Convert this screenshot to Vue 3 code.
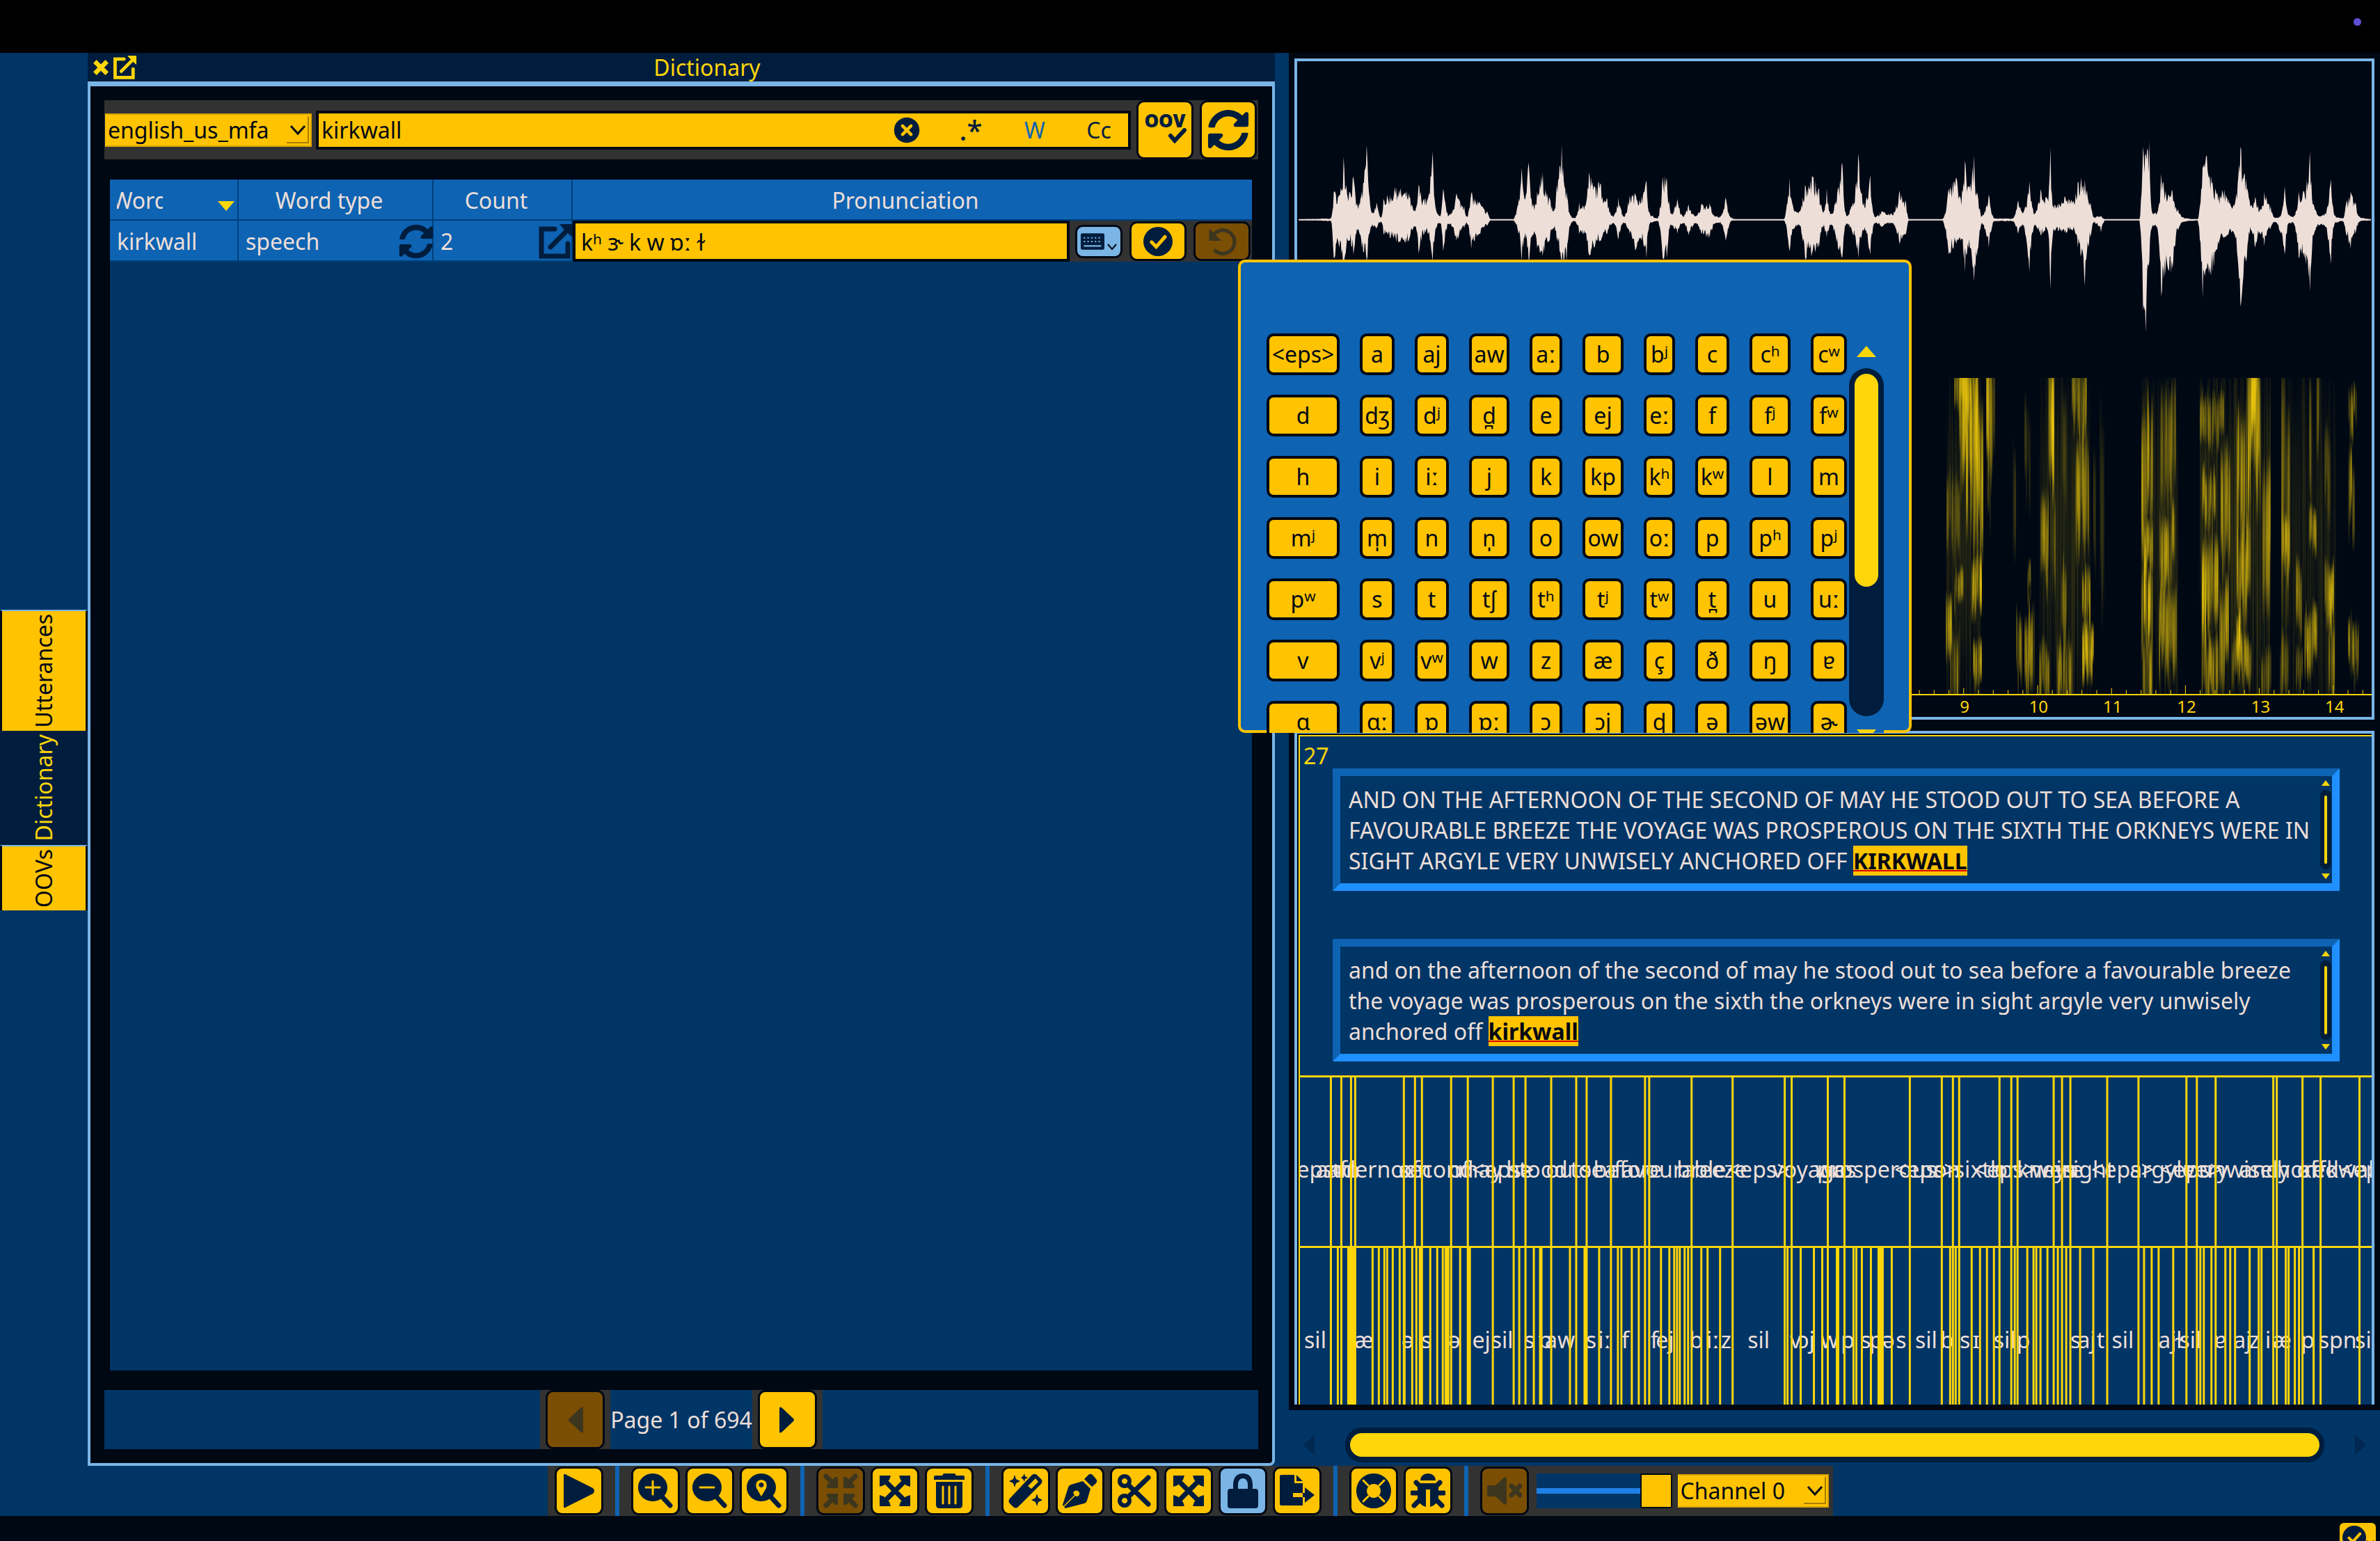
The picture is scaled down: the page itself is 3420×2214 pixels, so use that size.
<template>
  <div class="app">
    <header class="menu-bar"><span class="rec-dot"></span></header>

    <div class="workspace">
      <nav class="side-tabs">
        <button class="side-tab utterances"><span>Utterances</span></button>
        <button class="side-tab active"><span>Dictionary</span></button>
        <button class="side-tab oovs"><span>OOVs</span></button>
      </nav>

      <section class="dock">
        <div class="dock-title">
          <button class="title-btn" aria-label="Close">
            <svg viewBox="0 0 24 24" width="26" height="26"><path d="M4 4L20 20M20 4L4 20" class="line heavy" /></svg>
          </button>
          <button class="title-btn" aria-label="Float">
            <svg viewBox="0 0 50 50" width="34" height="34"><path :d="icons.external.line" class="line" /><path :d="icons.external.fill" /></svg>
          </button>
          <h1>Dictionary</h1>
        </div>

        <div class="dock-body">
          <div class="search-bar">
            <div class="combo dict-combo">
              <select aria-label="Dictionary">
                <option>english_us_mfa</option>
              </select>
              <svg class="chevron" viewBox="0 0 24 16" width="24" height="16"><path d="M2 2L12 13L22 2" /></svg>
            </div>
            <div class="search-box">
              <input v-model="search" type="text" aria-label="Search" />
              <button aria-label="Clear">
                <svg viewBox="0 0 50 50" width="38" height="38">
                  <circle cx="25" cy="25" r="24" /><path d="M17 17L33 33M33 17L17 33" class="cut wide" />
                </svg>
              </button>
              <button class="regex">.*</button>
              <button class="whole">W</button>
              <button>Cc</button>
            </div>
            <button class="tool tall oov" aria-label="OOV check">
              <span>OOV</span>
              <svg viewBox="0 0 28 22" width="28" height="22"><path d="M4 11L10 18L24 3" class="line check" /></svg>
            </button>
            <button class="tool tall" aria-label="Refresh">
              <svg viewBox="0 0 512 512" width="60" height="60"><path :d="syncPath" /></svg>
            </button>
          </div>

          <div class="table-area">
            <table>
              <colgroup>
                <col class="c-word" />
                <col class="c-type" />
                <col class="c-count" />
                <col />
              </colgroup>
              <thead>
                <tr>
                  <th class="sort-head">
                    <div class="sorted">
                      <span class="elided">Word</span>
                      <svg viewBox="0 0 24 14" width="24" height="14"><path d="M0 0H24L12 14z" /></svg>
                    </div>
                  </th>
                  <th>Word type</th>
                  <th>Count</th>
                  <th>Pronunciation</th>
                </tr>
              </thead>
              <tbody>
                <tr>
                  <td>kirkwall</td>
                  <td>
                    <div class="cell">
                      speech
                      <svg viewBox="0 0 512 512" width="50" height="50"><path :d="syncPath" /></svg>
                    </div>
                  </td>
                  <td>
                    <div class="cell">
                      2
                      <svg viewBox="0 0 50 50" width="50" height="50"><path :d="icons.external.line" class="line" /><path :d="icons.external.fill" /></svg>
                    </div>
                  </td>
                  <td>
                    <div class="editor">
                      <input v-model="pronunciation" type="text" aria-label="Pronunciation" />
                      <div class="editor-tools">
                        <div class="keyboard-anchor">
                          <button class="tool key-toggle" aria-label="Keyboard">
                            <svg viewBox="0 0 32 22" width="34" height="24">
                              <rect width="32" height="22" rx="2" />
                              <path d="M4 6H28M4 11H28" class="cut dots" /><path d="M5 17H27" class="cut dash" />
                            </svg>
                            <svg class="mini" viewBox="0 0 14 10" width="14" height="10"><path d="M1 1L7 8L13 1" /></svg>
                          </button>

                          <div class="popup">
                            <div class="popup-view">
                              <div class="keys">
                                <button v-for="key in phoneKeys" :key="key">{{ key }}</button>
                              </div>
                              <div class="v-scroll">
                                <svg viewBox="0 0 28 16" width="28" height="16"><path d="M0 16L14 0L28 16z" /></svg>
                                <div class="v-track"><div class="v-thumb"></div></div>
                                <svg viewBox="0 0 28 16" width="28" height="16"><path d="M0 0H28L14 16z" /></svg>
                              </div>
                            </div>
                          </div>
                        </div>
                        <button class="tool save" aria-label="Save">
                          <svg viewBox="0 0 50 50" width="42" height="42">
                            <circle cx="25" cy="25" r="25" /><path d="M14 26L22 34L37 17" class="cut wide" />
                          </svg>
                        </button>
                        <button class="tool save" disabled aria-label="Undo">
                          <svg viewBox="0 0 50 50" width="44" height="44">
                            <path d="M10 16A19 19 0 1 1 14 40" class="line undo" /><path d="M4 4V24H24z" />
                          </svg>
                        </button>
                      </div>
                    </div>
                  </td>
                </tr>
              </tbody>
            </table>
          </div>

          <div class="pagination">
            <div class="page-slot">
              <button class="tool page" disabled aria-label="Previous page">
                <svg viewBox="0 0 22 38" width="22" height="38"><path d="M22 2V36Q21 39 18 36L2 21Q0 19 2 17L18 2Q21 -1 22 2z" /></svg>
              </button>
            </div>
            <span>Page 1 of 694</span>
            <div class="page-slot">
              <button class="tool page" aria-label="Next page">
                <svg viewBox="0 0 22 38" width="22" height="38"><path d="M0 2V36Q1 39 4 36L20 21Q22 19 20 17L4 2Q1 -1 0 2z" /></svg>
              </button>
            </div>
          </div>
        </div>
      </section>

      <main class="viewer">
        <div class="plots">
          <div class="audio-panel">
            <svg class="wave" viewBox="0 0 1544 455" preserveAspectRatio="none">
              <path :d="wavePath" />
            </svg>
            <svg class="spectro" viewBox="0 0 1544 455" preserveAspectRatio="none">
              <defs>
                <linearGradient id="streak" x1="0" y1="0" x2="0" y2="1">
                  <stop offset="0" stop-color="#ffd60a" stop-opacity="0" />
                  <stop offset="0.25" stop-color="#ffd60a" stop-opacity="0.8" />
                  <stop offset="0.5" stop-color="#ffd60a" />
                  <stop offset="0.75" stop-color="#ffd60a" stop-opacity="0.8" />
                  <stop offset="1" stop-color="#ffd60a" stop-opacity="0" />
                </linearGradient>
              </defs>
              <rect
                v-for="(s, i) in streaks"
                :key="i"
                :x="s.x"
                :y="s.y"
                :width="s.w"
                :height="s.h"
                :opacity="s.o"
                fill="url(#streak)"
              />
              <path :d="tickPath" class="ticks" />
            </svg>
            <div class="axis">
              <span v-for="t in seconds" :key="t" :style="{ left: pct(2 + t * 106.2) }">{{ t }}</span>
            </div>
          </div>

          <div class="text-panel">
            <div class="tiers">
              <div class="transcripts">
                <span class="speaker">27</span>
                <div v-for="t in transcripts" :key="t.word" class="transcript">
                  <p>{{ t.text }} <mark>{{ t.word }}</mark></p>
                  <div class="mini-scroll">
                    <svg viewBox="0 0 12 8" width="12" height="8"><path d="M0 8L6 0L12 8z" /></svg>
                    <div class="mini-track"><div class="mini-thumb"></div></div>
                    <svg viewBox="0 0 12 8" width="12" height="8"><path d="M0 0H12L6 8z" /></svg>
                  </div>
                </div>
              </div>
              <div class="tier">
                <span v-for="(w, i) in words" :key="i" :style="{ left: pct(w.x) }">{{ w.label }}</span>
                <svg viewBox="0 0 1542 100" preserveAspectRatio="none"><path :d="wordLines" /></svg>
              </div>
              <div class="tier">
                <span v-for="(p, i) in phones" :key="i" :style="{ left: pct(p.x) }">{{ p.label }}</span>
                <svg viewBox="0 0 1542 100" preserveAspectRatio="none"><path :d="phoneLines" /></svg>
              </div>
            </div>
          </div>
        </div>

        <div class="h-scroll">
          <svg viewBox="0 0 16 30" width="16" height="30"><path d="M16 0V30L0 15z" /></svg>
          <div class="h-track"><div class="h-thumb"></div></div>
          <svg viewBox="0 0 16 30" width="16" height="30"><path d="M0 0V30L16 15z" /></svg>
        </div>
      </main>
    </div>

    <div class="toolbar">
      <div class="toolbar-inner">
        <template v-for="(name, i) in tools" :key="i">
          <span v-if="name === '|'" class="sep"></span>
          <button
            v-else
            class="tool"
            :class="{ checked: name === 'lock' }"
            :disabled="name === 'merge' || name === 'mute'"
            :aria-label="name"
          >
            <svg viewBox="0 0 50 50" width="50" height="50">
              <path v-if="icons[name].line" :d="icons[name].line" class="line" />
              <path v-if="icons[name].fill" :d="icons[name].fill" fill-rule="evenodd" />
              <path v-if="icons[name].cut" :d="icons[name].cut" class="cut" />
            </svg>
          </button>
        </template>
        <input class="volume" type="range" min="0" max="100" value="100" aria-label="Volume" />
        <div class="combo channel-combo">
          <select aria-label="Channel">
            <option>Channel 0</option>
          </select>
          <svg class="chevron" viewBox="0 0 24 16" width="24" height="16"><path d="M2 2L12 13L22 2" /></svg>
        </div>
      </div>
    </div>

    <footer class="status-bar">
      <button class="status-btn" aria-label="Status">
        <svg viewBox="0 0 50 50" width="34" height="34">
          <circle cx="25" cy="25" r="25" /><path d="M14 26L22 34L37 17" class="cut wide" />
        </svg>
        <svg class="mini" viewBox="0 0 14 10" width="12" height="10"><path d="M1 1L7 8L13 1" /></svg>
      </button>
    </footer>
  </div>
</template>

<script setup>
import { ref } from 'vue'

const search = ref('kirkwall')
const pronunciation = ref('kʰ ɝ k w ɒː ɫ')

const syncPath =
  'M370.72 133.28C339.458 104.008 298.888 87.962 255.848 88c-77.458.068-144.328 53.178-162.791 126.85-1.344 5.363-6.122 9.15-11.651 9.15H24.103c-7.498 0-13.194-6.807-11.807-14.176C33.933 94.924 134.813 8 256 8c66.448 0 126.791 26.136 171.315 68.685L463.03 40.97C478.149 25.851 504 36.559 504 57.941V192c0 13.255-10.745 24-24 24H345.941c-21.382 0-32.09-25.851-16.971-40.971l41.75-41.749zM32 296h134.059c21.382 0 32.09 25.851 16.971 40.971l-41.75 41.75c31.262 29.273 71.835 45.319 114.876 45.28 77.418-.07 144.315-53.144 162.787-126.849 1.344-5.363 6.122-9.15 11.651-9.15h57.304c7.498 0 13.194 6.807 11.807 14.176C478.067 417.076 377.187 504 256 504c-66.448 0-126.791-26.136-171.315-68.685L48.97 471.03C33.851 486.149 8 475.441 8 454.059V320c0-13.255 10.745-24 24-24z'

const LENS = 'M21 0A21 20 0 1 1 20.9 0z'
const icons = {
  external: {
    line: 'M24 7H5V46H43V28M18 33L42 9',
    fill: 'M31 0H50V19L44 14L36 6z'
  },
  play: { fill: 'M3 3Q3 -1 7 2L45 21Q49 25 45 29L7 48Q3 51 3 47z' },
  'zoom-in': { line: 'M34 33L46 46', fill: LENS, cut: 'M21 11V30M11 20H31' },
  'zoom-out': { line: 'M34 33L46 46', fill: LENS, cut: 'M11 20H31' },
  'zoom-fit': {
    line: 'M34 33L46 46',
    fill: 'M21 0A21 20 0 1 1 20.9 0zM21 33L14 21Q11 10 21 9Q31 10 28 21zM21 13A3.5 3.5 0 1 1 20.9 13z'
  },
  merge: {
    line: 'M4 4L16 16M46 4L34 16M4 46L16 34M46 46L34 34',
    fill: 'M21 5V21H5V17L17 5zM29 5V21H45V17L33 5zM21 45V29H5V33L17 45zM29 45V29H45V33L33 45z'
  },
  expand: {
    line: 'M9 9L41 41M41 9L9 41',
    fill: 'M3 3H19L17 9L9 17L3 19zM47 3H31L33 9L41 17L47 19zM3 47H19L17 41L9 33L3 31zM47 47H31L33 41L41 33L47 31z'
  },
  trash: {
    fill: 'M17 0H33L35 3H45Q47 3 47 5V9H3V5Q3 3 5 3H15zM6 12H44V45Q44 50 39 50H11Q6 50 6 45z',
    cut: 'M16 19V43M25 19V43M34 19V43'
  },
  wand: {
    fill: 'M33 3Q37 -1 41 2L47 8Q50 11 47 15L14 48Q11 51 7 48L2 43Q-1 40 2 36zM39 7L28 18L33 22L43 12zM9 2L11 8L17 11L11 14L9 20L7 14L1 11L7 8zM23 0L24 4L28 6L24 8L23 12L21 8L18 6L21 4zM41 29L43 35L49 38L43 41L41 47L39 41L33 38L39 35z'
  },
  pen: {
    fill: 'M36 3Q39 -1 43 2L48 8Q51 11 47 15L42 19L31 8zM29 11L40 22L35 39Q34 42 31 43L4 50L2 48L18 32Q20 34 23 32Q26 28 22 25Q17 23 15 28L17 31L1 47L0 45L8 20Q9 17 12 16z'
  },
  cut: {
    line: 'M18 18L45 44M18 32L45 6',
    fill: 'M11 1A10 10 0 1 1 10.9 1zM11 7A4 4 0 1 0 11.1 7zM11 29A10 10 0 1 1 10.9 29zM11 35A4 4 0 1 0 11.1 35z'
  },
  lock: {
    fill: 'M7 22H11V15Q12 0 25 0Q38 0 39 15V22H43Q47 22 47 26V46Q47 50 43 50H7Q3 50 3 46V26Q3 22 7 22zM18 22H32V15Q31 7 25 7Q19 7 18 15z'
  },
  export: {
    fill: 'M2 2H21V14H33V28H19V34H33V46H2Q0 46 0 44V4Q0 2 2 2zM24 2L33 11H24zM36 20L50 31L36 42V34H33V28H36z'
  },
  help: {
    fill: 'M25 0A25 25 0 1 1 24.9 0zM25 15A10 10 0 1 0 25.1 15z',
    cut: 'M10 10L17 17M40 10L33 17M10 40L17 33M40 40L33 33'
  },
  bug: {
    line: 'M8 13L14 19M42 13L36 19M2 28H12M48 28H38M5 46L14 37M45 46L36 37',
    fill: 'M14 10Q15 0 25 0Q35 0 36 10zM10 14H40V34Q39 45 28 48V23H22V48Q11 45 10 34z'
  },
  mute: {
    line: 'M35 18L47 31M47 18L35 31',
    fill: 'M2 17H12L24 6Q28 4 28 8V42Q28 46 24 44L12 33H2Q0 33 0 31V19Q0 17 2 17z'
  }
}

const tools = [
  'play', '|', 'zoom-in', 'zoom-out', 'zoom-fit', '|', 'merge', 'expand', 'trash', '|',
  'wand', 'pen', 'cut', 'expand', 'lock', 'export', '|', 'help', 'bug', '|', 'mute'
]

const phoneKeys = [
  '<eps>', 'a', 'aj', 'aw', 'aː', 'b', 'bʲ', 'c', 'cʰ', 'cʷ',
  'd', 'dʒ', 'dʲ', 'd̪', 'e', 'ej', 'eː', 'f', 'fʲ', 'fʷ',
  'h', 'i', 'iː', 'j', 'k', 'kp', 'kʰ', 'kʷ', 'l', 'm',
  'mʲ', 'm̩', 'n', 'n̩', 'o', 'ow', 'oː', 'p', 'pʰ', 'pʲ',
  'pʷ', 's', 't', 'tʃ', 'tʰ', 'tʲ', 'tʷ', 't̪', 'u', 'uː',
  'v', 'vʲ', 'vʷ', 'w', 'z', 'æ', 'ç', 'ð', 'ŋ', 'ɐ',
  'ɑ', 'ɑː', 'ɒ', 'ɒː', 'ɔ', 'ɔj', 'ɖ', 'ə', 'əw', 'ɚ'
]

const transcripts = [
  {
    text: 'AND ON THE AFTERNOON OF THE SECOND OF MAY HE STOOD OUT TO SEA BEFORE A FAVOURABLE BREEZE THE VOYAGE WAS PROSPEROUS ON THE SIXTH THE ORKNEYS WERE IN SIGHT ARGYLE VERY UNWISELY ANCHORED OFF',
    word: 'KIRKWALL'
  },
  {
    text: 'and on the afternoon of the second of may he stood out to sea before a favourable breeze the voyage was prosperous on the sixth the orkneys were in sight argyle very unwisely anchored off',
    word: 'kirkwall'
  }
]

const pct = x => `${(x / 1542) * 100}%`

// deterministic noise so that every render is the same
let seed = 7
const rand = () => {
  seed = (seed * 16807) % 2147483647
  return seed / 2147483647
}

// word intervals: [start, label]
const wordTier = [
  [0, '<eps>'], [44, 'and'], [59, 'on'], [73, 'the'], [79, 'afternoon'], [149, 'of'], [165, 'the'],
  [175, 'second'], [217, 'of'], [241, 'may'], [277, '<eps>'], [307, 'he'], [324, 'stood'], [361, 'out'],
  [397, 'to'], [412, 'sea'], [447, 'before'], [496, 'a'], [502, 'favourable'], [563, 'breeze'],
  [622, '<eps>'], [697, 'the'], [707, 'voyage'], [759, 'was'], [783, 'prosperous'], [877, '<eps>'],
  [923, 'on'], [939, 'the'], [948, 'sixth'], [1006, '<eps>'], [1023, 'the'], [1032, 'orkneys'],
  [1084, 'were'], [1096, 'in'], [1108, 'sight'], [1161, '<eps>'], [1206, 'argyle'], [1275, '<eps>'],
  [1290, 'very'], [1317, 'unwisely'], [1400, ''], [1405, 'anchored'], [1442, 'off'], [1468, 'kirkwall'],
  [1524, '<eps>'], [1560, '']
]
// labels are hidden on intervals that are too narrow
const words = wordTier
  .slice(0, -1)
  .map(([x, label], i) => ({ x: (x + wordTier[i + 1][0]) / 2, w: wordTier[i + 1][0] - x, label }))
  .filter(w => w.w > 10)

const vline = (x, w = 3) => `M${x - 1} 0h${w}v100h-${w}z`
const wordLines = wordTier.slice(1, -1).map(([x]) => vline(x)).join('')

const phoneEdges = [
  44, 54, 59, 104, 113, 121, 125, 133, 143, 149, 161, 167, 172, 175, 187, 197, 205, 217, 230, 277, 307,
  315, 324, 336, 361, 388, 397, 409, 412, 430, 447, 457, 462, 477, 487, 496, 502, 519, 531, 538, 542,
  546, 553, 558, 563, 577, 586, 604, 622, 697, 701, 707, 720, 739, 751, 759, 783, 796, 800, 808, 821,
  851, 877, 923, 935, 939, 943, 948, 966, 978, 988, 998, 1006, 1023, 1028, 1032, 1046, 1055, 1059, 1065,
  1075, 1084, 1090, 1096, 1102, 1108, 1122, 1141, 1161, 1206, 1214, 1225, 1235, 1256, 1275, 1290, 1295,
  1300, 1311, 1317, 1331, 1338, 1345, 1366, 1379, 1383, 1400, 1405, 1418, 1422, 1431, 1437, 1442, 1458,
  1468, 1524
]
const phoneBlocks = [[69, 13], [150, 3], [209, 7], [241, 6], [345, 5], [772, 5], [832, 9]]
const phoneLines =
  phoneEdges.map(x => vline(x)).join('') + phoneBlocks.map(([x, w]) => vline(x, w)).join('')

const phones = [
  [22, 'sil'], [92, 'æ'], [155, 'ə'], [182, 's'], [222, 'ə'], [261, 'ej'], [291, 'sil'], [330, 's'],
  [353, 'ɒ'], [374, 'aw'], [419, 's'], [438, 'iː'], [468, 'f'], [510, 'f'], [525, 'ej'], [570, 'b'],
  [594, 'iː'], [613, 'z'], [660, 'sil'], [713, 'v'], [729, 'ɔj'], [762, 'w'], [788, 'p'], [814, 's'],
  [829, 'p'], [847, 'ə'], [865, 's'], [901, 'sil'], [931, 'b'], [957, 's'], [973, 'ɪ'], [1014, 'sil'],
  [1041, 'p'], [1116, 's'], [1132, 'aj'], [1152, 't'], [1184, 'sil'], [1248, 'aj'], [1265, 'ɫ'],
  [1281, 'sil'], [1324, 'ɐ'], [1356, 'aj'], [1373, 'z'], [1393, 'i'], [1413, 'æ'], [1450, 'p'],
  [1493, 'spn'], [1534, 'sil']
].map(([x, label]) => ({ x, label }))

// waveform envelope: x, amplitude above, amplitude below
const envelope = [
  26, 1, 1, 72, 2, 2, 76, 40, 55, 84, 35, 40, 90, 90, 60, 98, 40, 30, 104, 62, 50, 110, 20, 15, 116, 40, 40,
  123, 107, 60, 130, 10, 10, 137, 25, 12, 143, 3, 3, 147, 30, 20, 165, 46, 32, 183, 38, 30, 192, 12, 10,
  197, 50, 48, 205, 30, 20, 210, 30, 20, 217, 98, 60, 223, 10, 10, 228, 5, 5, 232, 45, 45, 240, 6, 6,
  251, 38, 30, 262, 20, 12, 266, 5, 5, 272, 38, 42, 284, 25, 20, 295, 12, 8, 300, 1, 1, 332, 1, 1,
  340, 30, 20, 344, 75, 60, 348, 30, 25, 354, 82, 60, 361, 20, 20, 366, 40, 40, 374, 68, 52, 384, 30, 30,
  390, 12, 12, 394, 50, 30, 401, 107, 60, 408, 40, 60, 414, 6, 6, 420, 2, 2, 426, 25, 20, 434, 20, 20,
  440, 68, 50, 448, 48, 40, 456, 52, 30, 466, 30, 20, 474, 5, 5, 482, 32, 28, 490, 5, 5, 498, 35, 20,
  506, 36, 44, 515, 34, 30, 522, 56, 55, 527, 8, 5, 538, 2, 2, 545, 62, 55, 551, 60, 55, 557, 8, 8,
  566, 30, 20, 574, 5, 5, 582, 22, 22, 592, 5, 5, 600, 22, 20, 612, 24, 26, 620, 5, 5, 628, 5, 5,
  635, 32, 30, 643, 3, 2, 650, 1, 1, 718, 1, 1, 726, 60, 45, 733, 12, 12, 740, 12, 8, 748, 50, 55,
  758, 64, 48, 768, 45, 40, 774, 10, 10, 779, 45, 25, 785, 8, 8, 795, 45, 40, 801, 82, 55, 807, 5, 5,
  816, 25, 20, 824, 95, 55, 832, 25, 15, 841, 64, 50, 847, 5, 5, 858, 12, 10, 872, 8, 5, 883, 42, 35,
  892, 25, 20, 896, 1, 1, 944, 1, 1, 953, 45, 50, 964, 60, 35, 970, 30, 30, 976, 85, 75, 983, 45, 40,
  989, 93, 88, 995, 30, 40, 1000, 5, 5, 1010, 36, 40, 1018, 2, 2, 1044, 2, 2, 1052, 28, 20, 1059, 10, 8,
  1068, 55, 75, 1075, 8, 8, 1084, 44, 22, 1094, 30, 15, 1098, 104, 100, 1102, 20, 15, 1118, 33, 18,
  1130, 26, 15, 1137, 55, 40, 1147, 58, 95, 1155, 25, 25, 1160, 4, 4, 1170, 6, 18, 1176, 1, 1, 1225, 1, 1,
  1230, 105, 130, 1234, 95, 162, 1239, 113, 60, 1243, 10, 10, 1250, 10, 10, 1256, 66, 110, 1262, 42, 80,
  1272, 40, 70, 1280, 15, 15, 1288, 3, 3, 1308, 1, 1, 1315, 75, 112, 1321, 91, 70, 1329, 55, 75,
  1338, 35, 35, 1346, 44, 25, 1352, 30, 20, 1360, 20, 20, 1369, 105, 125, 1377, 60, 60, 1384, 20, 15,
  1390, 33, 40, 1397, 15, 20, 1403, 40, 38, 1412, 20, 12, 1418, 3, 3, 1426, 5, 20, 1432, 48, 50,
  1438, 8, 5, 1445, 5, 5, 1452, 40, 55, 1460, 40, 55, 1468, 98, 103, 1474, 20, 20, 1481, 5, 8,
  1490, 10, 10, 1498, 58, 64, 1503, 6, 6, 1515, 2, 2, 1520, 25, 22, 1526, 40, 42, 1533, 25, 20,
  1540, 3, 2, 1556, 1, 1
]

// steep near the louder end of each step, so that peaks stay thin
const between = (a, b, t) => (b > a ? a + (b - a) * t ** 1.6 : b + (a - b) * (1 - t) ** 1.6)

const buildWave = () => {
  const top = []
  const bottom = []
  for (let i = 0; i < envelope.length - 3; i += 3) {
    const [x0, u0, d0, x1, u1, d1] = envelope.slice(i, i + 6)
    const n = Math.max(1, x1 - x0)
    for (let k = 0; k < n; k++) {
      const t = k / n
      const jitterUp = k === 0 ? 1 : 0.6 + rand() * 0.5
      const jitterDown = k === 0 ? 1 : 0.6 + rand() * 0.5
      const x = ((x0 + (x1 - x0) * t) * 1.0077 - 24).toFixed(1)
      top.push(`${x} ${(228 - Math.max(1, between(u0, u1, t) * jitterUp)).toFixed(1)}`)
      bottom.push(`${x} ${(228 + Math.max(1, between(d0, d1, t) * jitterDown)).toFixed(1)}`)
    }
  }
  return `M${top.join('L')}L${bottom.reverse().join('L')}Z`
}
const wavePath = buildWave()

// energy regions: x0, x1, y0, y1, strength
const regions = [
  [212, 250, 480, 800, 0.4], [210, 225, 980, 1260, 0.7], [222, 250, 1130, 1440, 0.5], [235, 262, 880, 1040, 0.5],
  [235, 300, 40, 260, 0.6], [250, 310, 0, 560, 0.8], [285, 320, 200, 820, 0.8], [290, 320, 820, 1050, 1],
  [293, 318, 1150, 1360, 0.8], [335, 357, 0, 480, 0.8], [338, 350, 420, 700, 0.4], [418, 424, 400, 960, 0.25],
  [455, 470, 200, 560, 0.35], [428, 444, 1060, 1360, 0.5], [455, 482, 1030, 1360, 0.7], [465, 478, 850, 1000, 0.5],
  [505, 530, 600, 940, 0.55], [500, 528, 1180, 1440, 0.5], [530, 545, 0, 560, 0.95], [535, 550, 560, 1000, 0.35],
  [572, 582, 200, 680, 0.45], [570, 585, 840, 1150, 0.5], [555, 602, 1160, 1440, 0.5], [603, 650, 40, 350, 0.6],
  [615, 655, 330, 760, 0.6], [635, 657, 880, 1120, 0.7], [635, 668, 1100, 1320, 0.8], [690, 700, 260, 980, 0.2],
  [670, 678, 420, 900, 0.3], [822, 856, 200, 700, 0.7], [826, 856, 700, 900, 0.6], [822, 856, 830, 1220, 1],
  [826, 856, 1150, 1440, 0.6], [880, 925, 150, 640, 0.4], [878, 925, 640, 960, 0.6], [875, 930, 950, 1310, 0.65],
  [1005, 1075, 170, 380, 0.5], [1010, 1050, 480, 700, 0.6], [1010, 1060, 760, 1120, 0.9], [1010, 1060, 1150, 1440, 0.6],
  [1070, 1100, 380, 860, 0.6], [1065, 1095, 920, 1330, 0.6], [1120, 1160, 250, 780, 0.6], [1120, 1162, 700, 1100, 0.7],
  [1118, 1135, 1050, 1250, 1], [1105, 1162, 1150, 1370, 0.6], [1150, 1190, 0, 560, 0.7], [1165, 1180, 0, 300, 1],
  [1200, 1222, 420, 960, 0.6], [1195, 1225, 1200, 1440, 0.35], [1258, 1280, 120, 1000, 0.4], [1258, 1280, 650, 880, 0.6],
  [1255, 1278, 1150, 1440, 0.4], [1305, 1320, 830, 1120, 0.8], [1330, 1365, 1030, 1290, 0.75], [1345, 1365, 640, 820, 0.6],
  [1346, 1352, 120, 640, 0.35], [1370, 1376, 0, 400, 0.4], [1395, 1424, 850, 1130, 0.8], [1395, 1412, 300, 640, 0.25],
  [1408, 1422, 1100, 1440, 0.6], [1305, 1325, 1180, 1360, 0.4], [1468, 1490, 150, 340, 0.5], [1468, 1488, 420, 750, 0.6],
  [1468, 1492, 1070, 1310, 0.6], [1494, 1500, 1100, 1290, 0.4],
  [212, 320, 100, 1400, 0.14], [500, 660, 60, 1440, 0.14], [820, 935, 120, 1440, 0.16], [1005, 1225, 60, 1440, 0.18],
  [1258, 1425, 60, 1440, 0.1]
]

const buildStreaks = () => {
  const out = []
  for (const [x0, x1, y0, y1, strength] of regions) {
    const left = x0 / 2.178 + 836
    const right = x1 / 2.178 + 836
    const height = (y1 - y0) / 2.8
    for (let x = left; x < right; x += 2) {
      const shift = (rand() - 0.5) * height * 0.3
      out.push({
        x: Math.round(x),
        y: Math.round(y0 / 2.8 - 43 + shift),
        w: rand() > 0.4 ? 3 : 2,
        h: Math.round(height * (0.8 + rand() * 0.5)),
        o: (strength * (0.3 + rand() * 0.65)).toFixed(2)
      })
    }
  }
  return out
}
const streaks = buildStreaks()

const seconds = Array.from({ length: 15 }, (_, i) => i)
const tickPath = Array.from({ length: 73 }, (_, i) => {
  const len = i % 10 === 0 ? 13 : i % 5 === 0 ? 9 : 6
  return `M${(2 + i * 21.24).toFixed(1)} 455v-${len}`
}).join('')
</script>

<style>
body {
  background: #003566;
}
</style>

<style scoped>
.app {
  display: flex;
  flex-direction: column;
  height: 100vh;
  overflow: hidden;
  background: #003566;
  color: #eddfd8;
  font-family: 'Noto Sans', 'DejaVu Sans', sans-serif;
  font-size: 32px;
  line-height: 44px;
}

.app *,
.app *::before {
  box-sizing: border-box;
}

button,
input,
select {
  margin: 0;
  padding: 0;
  border: 0;
  border-radius: 0;
  background: none;
  color: inherit;
  font: inherit;
  outline: none;
}

svg {
  display: block;
  flex: none;
  fill: currentColor;
}

.line {
  fill: none;
  stroke: currentColor;
  stroke-width: 7;
  stroke-linecap: round;
}

.line.heavy {
  stroke-width: 6;
  stroke-linecap: butt;
}

.line.check {
  stroke-width: 6;
}

.line.undo {
  stroke-width: 6;
}

.cut {
  fill: none;
  stroke: var(--face, #ffc300);
  stroke-width: 3;
  stroke-linecap: round;
}

.cut.wide {
  stroke-width: 6;
}

.cut.dots {
  stroke-width: 2;
  stroke-dasharray: 2 3;
  stroke-linecap: butt;
}

.cut.dash {
  stroke-width: 2;
}

.menu-bar {
  display: flex;
  flex: none;
  justify-content: flex-end;
  height: 76px;
  padding: 26px 27px;
  background: #000;
}

.rec-dot {
  width: 11px;
  height: 11px;
  border-radius: 50%;
  background: #5e4fd6;
}

.workspace {
  display: grid;
  flex: 1;
  grid-template-columns: 126px minmax(0, 1706fr) 20px minmax(0, 1568fr);
  grid-template-rows: minmax(0, 1fr);
  min-height: 0;
}

/* sidebar */
.side-tabs {
  display: flex;
  flex-direction: column;
  padding-top: 800px;
}

.side-tab {
  display: flex;
  align-items: center;
  justify-content: center;
  height: 174px;
  border: solid #000814;
  border-width: 2px 3px 0;
  background: #ffc300;
  color: #000814;
}

.side-tab.utterances {
  border-top-color: #7ab5e6;
}

.side-tab.active {
  height: 164px;
  border-width: 0;
  background: #001d3d;
  color: #ffd60a;
}

.side-tab.oovs {
  height: 94px;
  border-top-color: #7ab5e6;
}

.side-tab span {
  writing-mode: vertical-rl;
  transform: rotate(180deg);
}

/* dock */
.dock {
  display: flex;
  flex-direction: column;
  min-width: 0;
}

.dock-title {
  display: flex;
  flex: none;
  align-items: center;
  height: 41px;
  padding-left: 6px;
  background: #001d3d;
  color: #ffd60a;
}

.dock-title h1 {
  flex: 1;
  margin: 0;
  font-size: 32px;
  font-weight: 400;
  text-align: center;
}

.title-btn {
  margin-right: 4px;
}

.dock-body {
  display: flex;
  flex: 1;
  flex-direction: column;
  min-height: 0;
  padding: 20px;
  border: 4px solid #7ab5e6;
  border-top-width: 7px;
  border-bottom-right-radius: 8px;
  background: #000814;
}

.search-bar {
  display: flex;
  align-items: center;
  height: 85px;
  padding: 0 2px 0 1px;
  background: #323232;
}

.combo {
  position: relative;
  height: 48px;
  border: 2px solid #d9a400;
  border-left-color: #ffc300;
  background: #ffc300;
  color: #000814;
}

.combo select {
  width: 100%;
  height: 44px;
  padding-left: 2px;
  appearance: none;
}

.combo .chevron {
  position: absolute;
  top: 14px;
  right: 6px;
  fill: none;
  stroke: #000814;
  stroke-width: 3;
  pointer-events: none;
}

.combo::before {
  content: '';
  position: absolute;
  top: 2px;
  right: 2px;
  bottom: 3px;
  width: 32px;
  border: solid #a87d00;
  border-width: 0 2px 2px 0;
  pointer-events: none;
}

.dict-combo {
  width: 297px;
  margin-right: 6px;
}

.search-box {
  display: flex;
  flex: 1;
  align-items: center;
  height: 56px;
  margin-right: 8px;
  border: 4px solid #000814;
  background: #ffc300;
  color: #001d3d;
}

.search-box input {
  flex: 1;
  min-width: 0;
  padding-left: 4px;
  color: #000814;
}

.search-box button {
  display: flex;
  justify-content: center;
  width: 92px;
}

.search-box button:last-child {
  margin-right: -4px;
}

.search-box .regex {
  font-size: 40px;
  font-weight: 500;
}

.search-box .whole {
  color: #0e63b3;
}

.tool {
  --face: #ffc300;
  display: flex;
  flex: none;
  align-items: center;
  justify-content: center;
  width: 70px;
  height: 70px;
  border: 3px solid #000814;
  border-radius: 11px;
  background: var(--face);
  color: #001d3d;
}

.tool:disabled {
  --face: #7a4e03;
  color: #3d361f;
}

.tool.checked {
  --face: #7ab5e6;
}

.tool.tall {
  width: 82px;
  height: 85px;
}

.tool.tall + .tool.tall {
  margin-left: 9px;
}

.oov {
  flex-direction: column;
  font-size: 26px;
  font-weight: 900;
  line-height: 22px;
}

.oov svg {
  align-self: flex-end;
  margin: 0 6px 6px 0;
}

/* table */
.table-area {
  flex: 1;
  min-height: 0;
  margin: 29px 9px 28px 8px;
  background: #003566;
}

table {
  width: 100%;
  border-collapse: collapse;
  table-layout: fixed;
  background: #0e63b3;
}

.c-word {
  width: 185px;
}

.c-type {
  width: 280px;
}

.c-count {
  width: 200px;
}

th,
td {
  height: 59px;
  padding: 0 0 0 10px;
  font-weight: 400;
  text-align: left;
  box-shadow: inset -2px -2px #003f7a;
}

th {
  padding: 0 20px 0 0;
  text-align: center;
}

th:last-child {
  box-shadow: inset 0 -2px #003f7a;
}

.sort-head {
  padding-right: 0;
}

td:last-child {
  padding: 0;
}

.sorted {
  display: flex;
  align-items: center;
  justify-content: space-between;
  padding: 0 6px 0 10px;
}

.sorted svg {
  margin-top: 16px;
  color: #ffd60a;
}

.elided {
  display: flex;
  justify-content: center;
  width: 66px;
  overflow: hidden;
}

.cell {
  display: flex;
  align-items: center;
  justify-content: space-between;
  height: 56px;
}

.cell svg {
  color: #001d3d;
}

.editor {
  display: flex;
  align-items: center;
  height: 59px;
  background: #323232;
}

.editor > input {
  flex: 1;
  min-width: 0;
  height: 59px;
  padding: 2px 8px 0;
  border: 4px solid #000814;
  background: #ffc300;
  color: #000814;
}

.editor-tools {
  display: flex;
  align-items: center;
  gap: 10px;
  width: 262px;
  padding-left: 8px;
}

.keyboard-anchor {
  position: relative;
}

.tool.key-toggle {
  --face: #7ab5e6;
  gap: 4px;
  width: 68px;
  height: 48px;
}

.mini {
  align-self: flex-end;
  margin-bottom: 8px;
  fill: none;
  stroke: #000814;
  stroke-width: 2;
}

.tool.save {
  width: 82px;
  height: 57px;
}

.pagination {
  display: flex;
  flex: none;
  align-items: center;
  justify-content: center;
  height: 85px;
  background: #003566;
}

.page-slot {
  padding: 0 8px;
  background: #323232;
}

.tool.page {
  width: 85px;
  height: 85px;
}

/* phone keyboard */
.popup {
  position: absolute;
  top: 50px;
  left: 234px;
  z-index: 5;
  width: 968px;
  height: 680px;
  padding: 102px 36px 0 37px;
  border: 4px solid #ffc300;
  border-radius: 10px;
  background: #0e63b3;
}

.popup-view {
  display: flex;
  height: 574px;
  overflow: hidden;
  background: #0e63b3;
}

.keys {
  display: grid;
  grid-template-columns: 105px 50px 49px 58px 47px 59px 45px 49px 59px 52px;
  grid-auto-rows: 60px;
  gap: 28px 29px;
}

.keys button {
  display: flex;
  justify-content: center;
  border: 4px solid #000814;
  border-radius: 10px;
  background: #ffc300;
  color: #000814;
  line-height: 52px;
  white-space: nowrap;
}

.v-scroll {
  display: flex;
  flex-direction: column;
  align-items: center;
  width: 50px;
  margin-left: 3px;
  padding-top: 18px;
  color: #ffd60a;
}

.v-track {
  flex: none;
  width: 50px;
  height: 500px;
  margin: 16px 0 19px;
  padding: 8px;
  border-radius: 25px;
  background: #001d3d;
}

.v-thumb {
  height: 306px;
  border-radius: 17px;
  background: #ffd60a;
}

/* viewer */
.viewer {
  display: flex;
  grid-column: 4;
  flex-direction: column;
  min-width: 0;
  min-height: 0;
}

.plots {
  display: grid;
  flex: 1;
  grid-template-rows: minmax(0, 950fr) minmax(0, 968fr);
  gap: 16px;
  min-height: 0;
  padding: 8px;
  background: #000814;
}

.audio-panel {
  display: flex;
  flex-direction: column;
  border: 4px solid #7ab5e6;
}

.wave,
.spectro {
  flex: 1 1 0;
  width: 100%;
  min-height: 0;
}

.wave {
  color: #eddfd8;
}

.spectro {
  overflow: hidden;
  border-bottom: 2px solid #ffd60a;
}

.ticks {
  fill: none;
  stroke: #ffd60a;
  stroke-width: 1;
}

.axis {
  position: relative;
  flex: none;
  height: 31px;
  overflow: hidden;
  color: #ffd60a;
  font-size: 24px;
  line-height: 31px;
}

.axis span {
  position: absolute;
  transform: translateX(-50%);
}

.text-panel {
  display: flex;
  padding: 2px 0 0 2px;
  border: 4px solid #7ab5e6;
  border-bottom: 0;
}

.tiers {
  display: grid;
  flex: 1;
  grid-template-rows: minmax(0, 487fr) minmax(0, 245fr) minmax(0, 228fr);
  min-width: 0;
  border: solid #ffd60a;
  border-width: 2px 0 0 2px;
  background: #003566;
}

.transcripts {
  display: flex;
  flex-direction: column;
  padding: 12px 46px 0 47px;
}

.speaker {
  flex: none;
  margin: 0 0 2px -42px;
  color: #ffd60a;
  line-height: 32px;
}

.transcript {
  display: flex;
  flex: none;
  justify-content: space-between;
  height: 176px;
  margin-bottom: 69px;
  border: 11px solid;
  border-color: #0e63b3 #1e90ff #1e90ff #0e63b3;
}

.transcript p {
  flex: 1;
  margin: 0;
  padding: 12px 0 0 12px;
}

.transcript mark {
  background: #ffc300;
  color: #000814;
  font-weight: 700;
  text-decoration: underline #dc0000 2px;
}

.mini-scroll {
  display: flex;
  flex-direction: column;
  align-items: center;
  justify-content: space-between;
  width: 18px;
  padding: 6px 0;
  color: #ffd60a;
}

.mini-track {
  width: 16px;
  height: 114px;
  padding: 8px 6px;
  border-radius: 8px;
  background: #001d3d;
}

.mini-thumb {
  height: 98px;
  border-radius: 2px;
  background: #ffd60a;
}

.tier {
  position: relative;
  overflow: hidden;
  border-top: 3px solid #ffd60a;
}

.tier span {
  position: absolute;
  top: 110px;
  transform: translateX(-50%);
  white-space: nowrap;
}

.tier svg {
  position: absolute;
  inset: 0;
  width: 100%;
  height: 100%;
  color: #ffd60a;
}

.h-scroll {
  display: flex;
  flex: none;
  align-items: center;
  height: 80px;
  padding: 20px 20px 0 21px;
  color: #002850;
}

.h-track {
  flex: 1;
  height: 50px;
  margin: 0 44px;
  padding: 8px 7px;
  border-radius: 24px;
  background: #001d3d;
}

.h-thumb {
  height: 34px;
  border-radius: 17px;
  background: #ffd60a;
}

/* bottom toolbar */
.toolbar {
  display: flex;
  flex: none;
  justify-content: center;
  height: 72px;
}

.toolbar-inner {
  display: flex;
  align-items: center;
  gap: 8px;
  padding: 0 6px 0 10px;
  background: #323232;
}

.sep {
  align-self: stretch;
  width: 6px;
  margin: 0 9px;
  background: #0e63b3;
}

.volume {
  width: 195px;
  height: 50px;
  margin-left: 3px;
  appearance: none;
  background: #003566;
}

.volume::-webkit-slider-runnable-track {
  height: 8px;
  background: #1e80e6;
}

.volume::-webkit-slider-thumb {
  width: 46px;
  height: 50px;
  margin-top: -21px;
  border: 2px solid #000814;
  appearance: none;
  background: #ffc300;
}

.channel-combo {
  width: 217px;
}

.status-bar {
  display: flex;
  flex: none;
  justify-content: flex-end;
  height: 36px;
  padding: 10px 6px 0 0;
  overflow: hidden;
  background: #000814;
}

.status-btn {
  display: flex;
  align-items: center;
  width: 52px;
  height: 42px;
  padding-left: 4px;
  border-radius: 6px;
  background: #ffc300;
  color: #001d3d;
}
</style>
